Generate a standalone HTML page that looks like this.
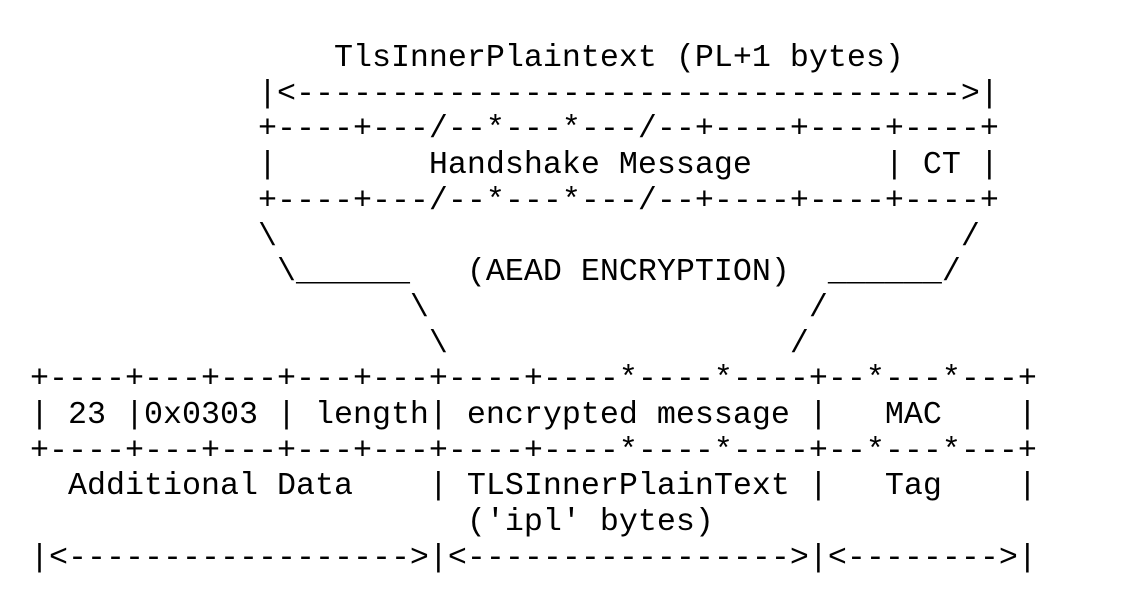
<!DOCTYPE html>
<html><head><meta charset="utf-8"><style>
html,body{margin:0;padding:0;background:#fff;width:1134px;height:616px;overflow:hidden}
pre{position:absolute;left:30px;top:41px;margin:0;font-family:"Liberation Mono",monospace;font-size:31.67px;line-height:35.7px;color:#000}
</style></head><body><pre>                TlsInnerPlaintext (PL+1 bytes)
            |&lt;-----------------------------------&gt;|
            +----+---/--*---*---/--+----+----+----+
            |        Handshake Message       | CT |
            +----+---/--*---*---/--+----+----+----+
            \                                    /
             \______   (AEAD ENCRYPTION)  ______/
                    \                    /
                     \                  /
+----+---+---+---+---+----+----*----*----+--*---*---+
| 23 |0x0303 | length| encrypted message |   MAC    |
+----+---+---+---+---+----+----*----*----+--*---*---+
  Additional Data    | TLSInnerPlainText |   Tag    |
                       ('ipl' bytes)
|&lt;------------------&gt;|&lt;-----------------&gt;|&lt;--------&gt;|</pre></body></html>
